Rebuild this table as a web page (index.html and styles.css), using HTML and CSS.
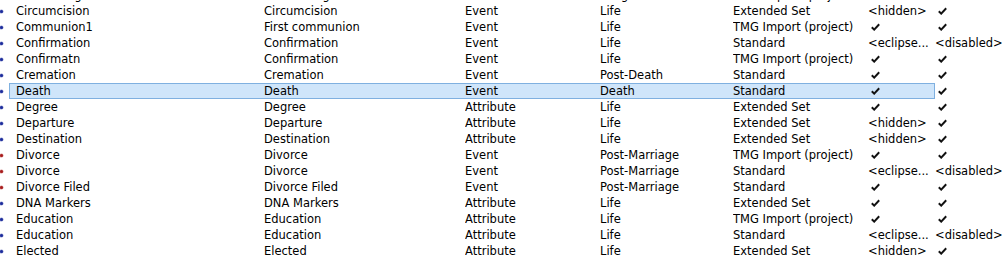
FILE: index.html
```html
<!DOCTYPE html>
<html>
<head>
<meta charset="utf-8">
<link rel="stylesheet" href="styles.css">
</head>
<body>
<div class="viewport">
  <div class="list" id="list"></div>
</div>
<script>
var rows = [
  ["b","Christening","Christening","Event","Religious","TMG Import (project)","c","c"],
  ["b","Circumcision","Circumcision","Event","Life","Extended Set","<hidden>","c"],
  ["b","Communion1","First communion","Event","Life","TMG Import (project)","c","c"],
  ["b","Confirmation","Confirmation","Event","Life","Standard","<eclipse...","<disabled>"],
  ["b","Confirmatn","Confirmation","Event","Life","TMG Import (project)","c","c"],
  ["b","Cremation","Cremation","Event","Post-Death","Standard","c","c"],
  ["b","Death","Death","Event","Death","Standard","c","c","sel"],
  ["b","Degree","Degree","Attribute","Life","Extended Set","c","c"],
  ["b","Departure","Departure","Attribute","Life","Extended Set","<hidden>","c"],
  ["b","Destination","Destination","Attribute","Life","Extended Set","<hidden>","c"],
  ["r","Divorce","Divorce","Event","Post-Marriage","TMG Import (project)","c","c"],
  ["r","Divorce","Divorce","Event","Post-Marriage","Standard","<eclipse...","<disabled>"],
  ["r","Divorce Filed","Divorce Filed","Event","Post-Marriage","Standard","c","c"],
  ["b","DNA Markers","DNA Markers","Attribute","Life","Extended Set","c","c"],
  ["b","Education","Education","Attribute","Life","TMG Import (project)","c","c"],
  ["b","Education","Education","Attribute","Life","Standard","<eclipse...","<disabled>"],
  ["b","Elected","Elected","Attribute","Life","Extended Set","<hidden>","c"]
];
var check = '<svg class="chk" width="9" height="8" viewBox="0 0 9 8"><path d="M0.8 4.2 L3.2 6.6 L8.2 1.2" fill="none" stroke="#111" stroke-width="2"/></svg>';
function cell(v, cls){
  var d = document.createElement("div");
  d.className = "cell " + cls;
  if (v === "c") d.innerHTML = check; else d.textContent = v;
  return d;
}
var list = document.getElementById("list");
rows.forEach(function(r){
  var row = document.createElement("div");
  row.className = "row";
  var b = document.createElement("div");
  b.className = "bullet-cell";
  var dot = document.createElement("span");
  dot.className = "dot " + (r[0] === "r" ? "red" : "blue");
  b.appendChild(dot);
  row.appendChild(b);
  var main = document.createElement("div");
  main.className = "main" + (r[8] === "sel" ? " selected" : "");
  for (var i = 1; i <= 6; i++) main.appendChild(cell(r[i], "c" + i));
  row.appendChild(main);
  row.appendChild(cell(r[7], "c7"));
  list.appendChild(row);
});
</script>
</body>
</html>
```
FILE: styles.css
```css
html, body {
  margin: 0;
  padding: 0;
  background: #ffffff;
}
body {
  font-family: "DejaVu Sans", Tahoma, Verdana, sans-serif;
  font-size: 11.5px;
  color: #000;
}
.viewport {
  height: 257px;
  overflow: hidden;
}
.list {
  margin-top: -13px;
}
.row {
  display: flex;
  height: 16px;
  line-height: 16px;
}
.bullet-cell {
  width: 9px;
  display: flex;
  align-items: center;
}
.dot {
  width: 3px;
  height: 3px;
  border-radius: 50%;
}
.dot.blue { background: #1c2c9c; box-shadow: 0 0 0 0.5px rgba(28,44,156,0.5); }
.dot.red { background: #a81c1c; box-shadow: 0 0 0 0.5px rgba(168,28,28,0.5); }
.main {
  width: 926px;
  box-sizing: border-box;
  padding-left: 6px;
  display: grid;
  grid-template-columns: 248px 201px 135px 133px 135px 68px;
  border: 1px solid transparent;
}
.main > .cell { margin-top: -1px; }
.main.selected {
  background: #cfe5fa;
  border-color: #7fb0e0;
}
.cell {
  white-space: nowrap;
  overflow: hidden;
  display: flex;
  align-items: center;
  height: 16px;
}
.chk { margin-left: 3px; }
```
